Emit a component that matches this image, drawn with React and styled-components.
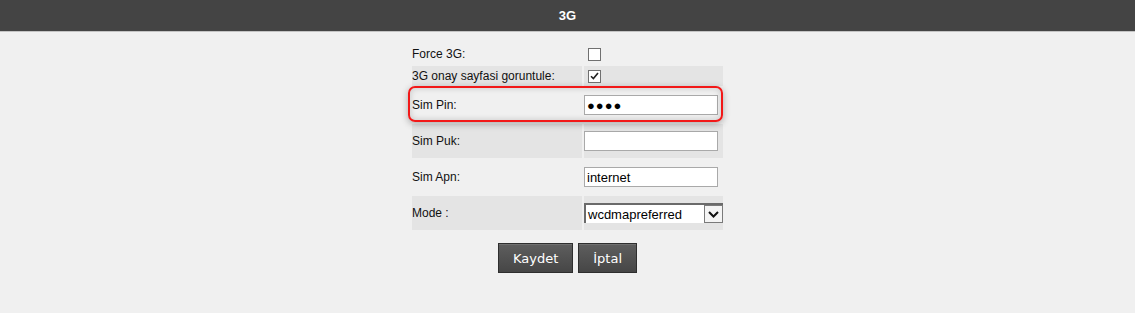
import styled, { createGlobalStyle } from "styled-components";

const GlobalStyle = createGlobalStyle`
  body {
    margin: 0;
    background: #f0f0f0;
    font-family: "Liberation Sans", Arial, sans-serif;
  }
`;

const Header = styled.div`
  height: 31px;
  background: #444444;
  border-bottom: 1px solid #c4c4c4;
  color: #fff;
  font-weight: bold;
  font-size: 13px;
  display: flex;
  align-items: center;
  justify-content: center;
`;

const Main = styled.div`
  display: flex;
  flex-direction: column;
  align-items: center;
  padding-top: 12px;
`;

const Form = styled.div`
  position: relative;
  display: grid;
  grid-template-columns: 170px 139px;
  gap: 2px;
`;

const Label = styled.div`
  height: ${(p) => p.h}px;
  background: ${(p) => (p.shade ? "#e4e4e4" : "transparent")};
  display: flex;
  align-items: center;
  font-size: 12px;
  color: #111;
`;

const Value = styled(Label)``;

const Check = styled.div`
  width: 11px;
  height: 11px;
  margin-left: 4px;
  border: 1px solid #707070;
  background: #fff;
  display: flex;
  align-items: center;
  justify-content: center;
`;

const TextBox = styled.div`
  box-sizing: border-box;
  width: 134px;
  height: 20px;
  background: #fff;
  border: 1px solid #a9a9a9;
  font-size: 13px;
  color: #000;
  padding-left: 2px;
  display: flex;
  align-items: center;
  letter-spacing: ${(p) => (p.secret ? "1px" : "0")};
`;

const Select = styled.div`
  box-sizing: border-box;
  width: 139px;
  height: 20px;
  background: #fff;
  border-top: 2px solid #6a6a6a;
  border-left: 2px solid #6a6a6a;
  display: flex;
  align-items: stretch;
  font-size: 13px;
  color: #000;
`;

const SelectText = styled.div`
  flex: 1;
  padding-left: 2px;
  display: flex;
  align-items: center;
`;

const Arrow = styled.div`
  width: 17px;
  border: 1px solid #7a7a7a;
  background: #f4f4f4;
  display: flex;
  align-items: center;
  justify-content: center;
`;

const Highlight = styled.div`
  position: absolute;
  left: -4px;
  top: 42px;
  width: 315px;
  height: 36px;
  box-sizing: border-box;
  border: 2px solid #f21818;
  border-radius: 7px;
  box-shadow: 0 2px 7px rgba(0, 0, 0, 0.3), inset 0 0 6px rgba(0, 0, 0, 0.18);
  pointer-events: none;
`;

const Buttons = styled.div`
  display: flex;
  gap: 5px;
  margin-top: 13px;
`;

const Button = styled.button`
  height: 30px;
  padding: 0 ${(p) => p.px}px;
  background: linear-gradient(#5e5e5e, #464646);
  border: 1px solid #2e2e2e;
  box-shadow: inset 0 1px 0 #707070;
  color: #fff;
  font-family: "DejaVu Sans", Verdana, sans-serif;
  font-size: 13px;
  cursor: pointer;
`;

const Tick = () => (
  <svg width="9" height="8" viewBox="0 0 9 8">
    <path d="M1 4.2 L3.4 6.6 L8 1" fill="none" stroke="#222" strokeWidth="1.6" />
  </svg>
);

const Chevron = () => (
  <svg width="11" height="7" viewBox="0 0 11 7">
    <path d="M1 1 L5.5 5.5 L10 1" fill="none" stroke="#111" strokeWidth="2" />
  </svg>
);

export default function App() {
  return (
    <>
      <GlobalStyle />
      <Header>3G</Header>
      <Main>
        <Form>
          <Label h={20}>Force 3G:</Label>
          <Value h={20}>
            <Check />
          </Value>

          <Label h={20} shade>3G onay sayfasi goruntule:</Label>
          <Value h={20} shade>
            <Check>
              <Tick />
            </Check>
          </Value>

          <Label h={34}>Sim Pin:</Label>
          <Value h={34}>
            <TextBox secret>●●●●</TextBox>
          </Value>

          <Label h={34} shade>Sim Puk:</Label>
          <Value h={34} shade>
            <TextBox />
          </Value>

          <Label h={34}>Sim Apn:</Label>
          <Value h={34}>
            <TextBox>internet</TextBox>
          </Value>

          <Label h={34} shade>Mode :</Label>
          <Value h={34} shade>
            <Select>
              <SelectText>wcdmapreferred</SelectText>
              <Arrow>
                <Chevron />
              </Arrow>
            </Select>
          </Value>

          <Highlight />
        </Form>
        <Buttons>
          <Button px={14}>Kaydet</Button>
          <Button px={14}>İptal</Button>
        </Buttons>
      </Main>
    </>
  );
}
